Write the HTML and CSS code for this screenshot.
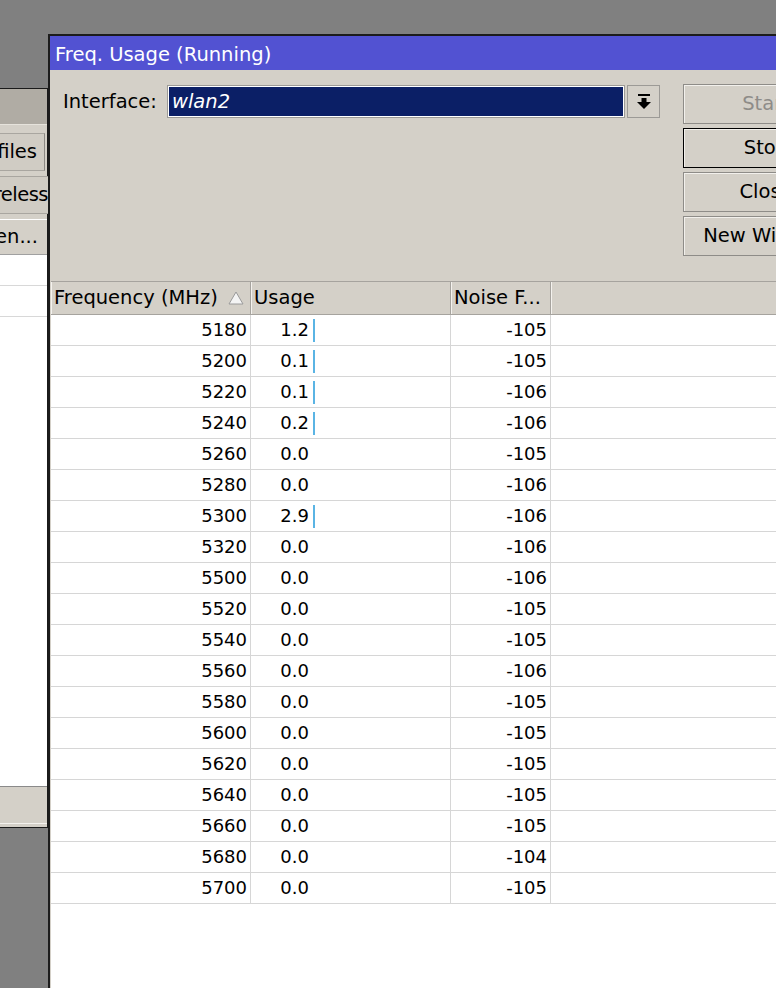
FILE: index.html
```html
<!DOCTYPE html>
<html lang="en">
<head>
  <meta charset="UTF-8" />
  <title>Freq. Usage (Running)</title>
  <link rel="stylesheet" href="styles.css">
</head>
<body>
  <div class="desk">

    <!-- window behind, mostly hidden -->
    <div class="win-back">
      <div class="back-title"></div>
      <div class="back-body">
        <div class="back-tab">Security Profiles</div>
        <div class="back-tab narrow">Wireless</div>
        <div class="back-head">Open...</div>
        <div class="back-list">
          <div class="back-row"></div>
          <div class="back-row"></div>
        </div>
        <div class="back-status"></div>
      </div>
    </div>

    <div class="win">
      <div class="title">Freq. Usage (Running)</div>

      <div class="panel">
        <div class="form-row">
          <span class="lbl">Interface:</span>
          <div class="combo">wlan2</div>
          <div class="drop">
            <svg width="16" height="16" viewBox="0 0 16 16">
              <rect x="2" y="0" width="12" height="2" fill="#000"/>
              <rect x="5.5" y="4" width="5" height="5" fill="#000"/>
              <polygon points="1,8 15,8 8,15" fill="#000"/>
            </svg>
          </div>
        </div>
        <div class="buttons">
          <div class="btn disabled">Start</div>
          <div class="btn focus">Stop</div>
          <div class="btn">Close</div>
          <div class="btn">New Window</div>
        </div>
      </div>

      <div class="grid">
        <div class="head">
          <div class="hcell">Frequency (MHz)
            <svg class="sort" width="16" height="14" viewBox="0 0 16 14">
              <polygon points="8,1 15,13 1,13" fill="#f4f4f4" stroke="#9a9a9a" stroke-width="1"/>
            </svg>
          </div>
          <div class="hcell">Usage</div>
          <div class="hcell">Noise F...</div>
          <div class="hcell last"></div>
        </div>
        <div id="rows"></div>
      </div>
    </div>
  </div>

  <script>
    var data = [
      [5180, "1.2", -105], [5200, "0.1", -105], [5220, "0.1", -106],
      [5240, "0.2", -106], [5260, "0.0", -105], [5280, "0.0", -106],
      [5300, "2.9", -106], [5320, "0.0", -106], [5500, "0.0", -106],
      [5520, "0.0", -105], [5540, "0.0", -105], [5560, "0.0", -106],
      [5580, "0.0", -105], [5600, "0.0", -105], [5620, "0.0", -105],
      [5640, "0.0", -105], [5660, "0.0", -105], [5680, "0.0", -104],
      [5700, "0.0", -105]
    ];

    var html = "";
    data.forEach(function (d) {
      var bar = parseFloat(d[1]) > 0 ? '<span class="bar"></span>' : '';
      html += '<div class="row">' +
        '<div class="cell num">' + d[0] + '</div>' +
        '<div class="cell usage"><span class="val">' + d[1] + '</span>' + bar + '</div>' +
        '<div class="cell num">' + d[2] + '</div>' +
        '<div class="cell last"></div>' +
        '</div>';
    });
    document.getElementById("rows").innerHTML = html;
  </script>
</body>
</html>
```

FILE: styles.css
```css
body {
  margin: 0;
  font-family: "DejaVu Sans", Verdana, sans-serif;
  font-size: 19.5px;
  color: #000;
  background: #808080;
}

.desk {
  position: relative;
  width: 776px;
  height: 988px;
  overflow: hidden;
  background: #808080;
}

/* ---- back window ---- */
.win-back {
  position: absolute;
  left: -254px;
  top: 88px;
  width: 302px;
  height: 740px;
  box-sizing: border-box;
  border: 1px solid #1a1a1a;
  background: #d4d0c8;
  display: flex;
  flex-direction: column;
}

.back-title {
  height: 35px;
  background: #b0aca4;
  border-bottom: 1px solid #e6e3dc;
}

.back-body {
  flex: 1;
  display: flex;
  flex-direction: column;
  align-items: flex-end;
  padding-top: 8px;
}

.back-tab {
  width: 200px;
  height: 38px;
  margin-bottom: 5px;
  margin-right: 2px;
  box-sizing: border-box;
  border: 1px solid #a9a6a0;
  border-right-color: #8c8984;
  background: #d0ccc4;
  line-height: 36px;
  text-align: right;
  padding-right: 7px;
  white-space: nowrap;
}

.back-tab.narrow {
  padding-right: 0;
  margin-right: -2px;
  letter-spacing: -0.5px;
}

.back-head {
  align-self: stretch;
  height: 36px;
  box-sizing: border-box;
  border-top: 1px solid #fff;
  border-bottom: 1px solid #a0a0a0;
  line-height: 34px;
  text-align: right;
  padding-right: 9px;
}

.back-list {
  align-self: stretch;
  flex: 1;
  background: #fff;
  border-bottom: 1px solid #8a8a8a;
}

.back-row {
  height: 30px;
  border-bottom: 1px solid #d8d8d8;
}

.back-status {
  align-self: stretch;
  height: 36px;
  border-bottom: 1px solid #f4f2ee;
  margin-bottom: 3px;
}

/* ---- main window ---- */
.win {
  position: absolute;
  left: 48px;
  top: 34px;
  width: 780px;
  height: 980px;
  box-sizing: border-box;
  border: 2px solid #1c1c1c;
  border-right: none;
  border-bottom: none;
  background: #d4d0c8;
  display: flex;
  flex-direction: column;
}

.title {
  height: 34px;
  box-sizing: border-box;
  padding: 2px 0 0 5px;
  line-height: 34px;
  background: #5252d2;
  color: #fff;
  white-space: nowrap;
  overflow: hidden;
}

.panel {
  height: 211px;
  display: flex;
  align-items: flex-start;
  padding: 15px 0 0 13px;
  box-sizing: border-box;
}

.form-row {
  display: flex;
  align-items: center;
}

.lbl {
  width: 104px;
}

.combo {
  width: 458px;
  height: 33px;
  box-sizing: border-box;
  border: 1px solid #9c9a96;
  box-shadow: inset 0 0 0 1px #ffffff;
  background: #0b1f66;
  color: #fff;
  font-style: italic;
  line-height: 32px;
  padding-left: 4px;
}

.drop {
  width: 33px;
  height: 33px;
  margin-left: 2px;
  box-sizing: border-box;
  border: 1px solid #9c9a96;
  display: flex;
  align-items: center;
  justify-content: center;
}

.buttons {
  display: flex;
  flex-direction: column;
  gap: 4px;
  margin-left: 23px;
  margin-top: -1px;
}

.btn {
  width: 166px;
  height: 40px;
  box-sizing: border-box;
  border: 1px solid #8e8c88;
  box-shadow: inset 1px 1px 0 #f2f0ec;
  line-height: 38px;
  text-align: center;
  white-space: nowrap;
}

.btn.disabled {
  color: #8e8c88;
}

.btn.focus {
  border-color: #000;
}

/* ---- list ---- */
.grid {
  flex: 1;
  margin-left: 1px;
  background: #fff;
  border-top: 1px solid #a6a39e;
}

.head,
.row {
  display: grid;
  grid-template-columns: 200px 200px 100px 1fr;
}

.hcell {
  height: 33px;
  box-sizing: border-box;
  background: #d4d0c8;
  border-right: 1px solid #a6a39e;
  border-bottom: 1px solid #a6a39e;
  box-shadow: inset 1px 0 0 #f4f2ee;
  line-height: 32px;
  padding-left: 3px;
  white-space: nowrap;
  display: flex;
  align-items: center;
}

.hcell.last {
  border-right: none;
}

.sort {
  margin-left: 10px;
}

.row {
  height: 31px;
  border-bottom: 1px solid #d6d6d6;
  box-sizing: border-box;
}

.cell {
  font-size: 18px;
  line-height: 30px;
  border-right: 1px solid #d6d6d6;
  white-space: nowrap;
}

.cell.last {
  border-right: none;
}

.num {
  text-align: right;
  padding-right: 3px;
}

.usage {
  display: flex;
  align-items: center;
}

.val {
  width: 58px;
  text-align: right;
}

.bar {
  width: 2px;
  height: 23px;
  margin-left: 4px;
  background: #5ab4e4;
}
```
